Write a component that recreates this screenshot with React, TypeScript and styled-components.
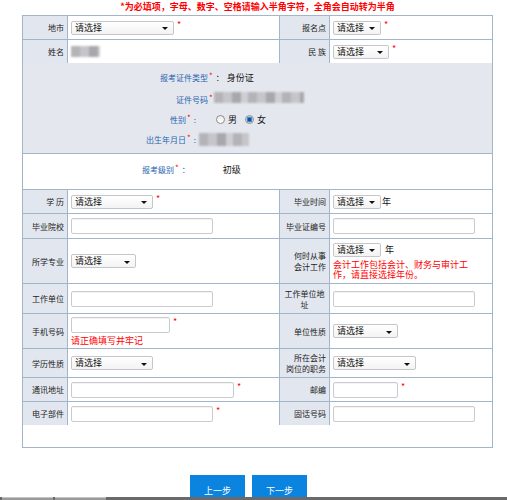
import React from 'react';
import styled, { createGlobalStyle } from 'styled-components';

const GlobalStyle = createGlobalStyle`
  html, body {
    margin: 0;
    background: #fff;
    overflow: hidden;
    font-family: "Noto Sans CJK SC", "Noto Sans", sans-serif;
  }
`;

const Page = styled.div`
  width: 471px;
  margin-left: 22px;
`;

const Notice = styled.div`
  height: 15px;
  line-height: 13px;
  text-align: center;
  color: #ff0000;
  font-size: 9px;
  font-weight: bold;
  white-space: nowrap;
`;

const Form = styled.div`
  border: 1px solid #a3b5c8;
  background: #fff;
  padding-bottom: 22px;
`;

const Grid = styled.div<{ $rows: string }>`
  display: grid;
  grid-template-columns: 44px 211px 49px 162px;
  grid-template-rows: ${(p) => p.$rows};
  gap: 1px;
  background: #a3b5c8;
`;

const Label = styled.div<{ $center?: boolean }>`
  background: #e2e7ef;
  display: flex;
  align-items: center;
  justify-content: ${(p) => (p.$center ? 'center' : 'flex-end')};
  text-align: ${(p) => (p.$center ? 'center' : 'right')};
  padding: 0 3px;
  font-size: 8px;
  line-height: 11px;
  color: #222;
`;

const Value = styled.div`
  background: #fff;
  display: flex;
  align-items: center;
  padding-left: 3px;
  font-size: 9px;
  color: #111;
`;

const Stack = styled.div`
  display: flex;
  flex-direction: column;
  align-items: flex-start;
  gap: 3px;
`;

const Line = styled.div`
  display: flex;
  align-items: center;
`;

const Select = styled.div<{ $w: number }>`
  width: ${(p) => p.$w}px;
  height: 14px;
  box-sizing: border-box;
  border: 1px solid #c3c7cc;
  border-radius: 2px;
  background: linear-gradient(#fff, #f3f3f3);
  display: flex;
  align-items: center;
  justify-content: space-between;
  padding: 0 5px 0 3px;
  font-size: 9px;
  line-height: 12px;
  color: #111;
`;

const Caret = styled.span`
  width: 0;
  height: 0;
  border-left: 3px solid transparent;
  border-right: 3px solid transparent;
  border-top: 3px solid #111;
  margin-top: 2px;
`;

const Input = styled.div<{ $w: number }>`
  width: ${(p) => p.$w}px;
  height: 16px;
  box-sizing: border-box;
  border: 1px solid #c8ccd2;
  border-radius: 2px;
  background: #fff;
  box-shadow: inset 0 1px 1px rgba(0, 0, 0, 0.05);
`;

const Star = styled.span`
  color: #ff0000;
  font-size: 9px;
  line-height: 9px;
  margin-left: 3px;
  margin-bottom: 6px;
`;

const Unit = styled.span<{ $gap?: number }>`
  font-size: 9px;
  margin-left: ${(p) => p.$gap ?? 1}px;
  color: #111;
`;

const Hint = styled.div<{ $w?: number }>`
  color: #ff0000;
  font-size: 9px;
  line-height: 10px;
  max-width: ${(p) => p.$w ?? 200}px;
`;

const Masked = styled.span<{ $w: number; $h: number }>`
  display: inline-block;
  width: ${(p) => p.$w}px;
  height: ${(p) => p.$h}px;
  background: repeating-linear-gradient(
    90deg,
    #b4b4b8 0 9px,
    #c6c6ca 9px 18px,
    #a8a8ac 18px 27px,
    #cfcfd3 27px 34px
  );
  filter: blur(1px);
`;

const Panel = styled.div`
  background: #e4e8ee;
  border-bottom: 1px solid #a3b5c8;
  height: 91px;
  box-sizing: border-box;
  padding-top: 4px;
  display: flex;
  flex-direction: column;
`;

const InfoRow = styled.div<{ $indent: number; $gap?: number }>`
  height: 20px;
  display: flex;
  align-items: center;
  padding-left: ${(p) => p.$indent}px;
  margin-bottom: ${(p) => p.$gap ?? 0}px;
`;

const InfoLabel = styled.span`
  color: #2a64b0;
  font-size: 8px;
`;

const InfoStar = styled.span`
  color: #ff0000;
  font-size: 8px;
  margin-bottom: 4px;
  margin-left: 1px;
`;

const InfoText = styled.span<{ $gap?: number }>`
  font-size: 9px;
  color: #111;
  margin-left: ${(p) => p.$gap ?? 0}px;
`;

const Colon = styled.span<{ $blue?: boolean }>`
  font-size: 8px;
  color: ${(p) => (p.$blue ? '#2a64b0' : '#111')};
  margin: 0 3px 0 3px;
`;

const LevelRow = styled.div`
  height: 36px;
  box-sizing: border-box;
  border-bottom: 1px solid #a3b5c8;
  display: flex;
  align-items: center;
  padding: 0 0 4px 119px;
`;

const RadioGroup = styled.div`
  display: flex;
  align-items: center;
  margin-left: 12px;
  gap: 3px;
`;

const Radio = styled.span<{ $checked?: boolean }>`
  width: 9px;
  height: 9px;
  box-sizing: border-box;
  border-radius: 50%;
  border: 1px solid #8c8c8c;
  background: ${(p) =>
    p.$checked
      ? 'radial-gradient(circle, #1d4f8f 0 1.5px, #3d86d6 2px 2.8px, #f4f4f4 3.2px)'
      : 'linear-gradient(#e9e9e9, #fff)'};
  margin-left: 5px;
`;

const ButtonBar = styled.div`
  display: flex;
  gap: 7px;
  padding-left: 168px;
  margin-top: 27px;
`;

const Button = styled.button`
  width: 55px;
  height: 22px;
  box-sizing: border-box;
  border: 0;
  padding: 8px 0 0;
  background: #0b84e0;
  color: #fff;
  font-family: inherit;
  font-size: 9px;
  line-height: 11px;
  text-align: center;
  vertical-align: top;
`;

const TaskBar = styled.div`
  position: fixed;
  left: 0;
  right: 0;
  bottom: 0;
  height: 3px;
  background: #6a6a6a;
  display: flex;
  gap: 2px;
  padding-left: 2px;
`;

const TaskTab = styled.span`
  width: 51px;
  background: #9a9a9a;
  border-top: 1px solid #c4c4c4;
`;

const Sel = ({ w }: { w: number }) => (
  <Select $w={w}>
    请选择
    <Caret />
  </Select>
);

const App = () => (
  <>
    <GlobalStyle />
    <Page>
      <Notice>*为必填项，字母、数字、空格请输入半角字符，全角会自动转为半角</Notice>
      <Form>
        <Grid $rows="23px 23px">
          <Label>地市</Label>
          <Value>
            <Sel w={103} />
            <Star>*</Star>
          </Value>
          <Label>报名点</Label>
          <Value>
            <Sel w={48} />
            <Star>*</Star>
          </Value>
          <Label>姓名</Label>
          <Value>
            <Masked $w={29} $h={11} />
          </Value>
          <Label>民 族</Label>
          <Value>
            <Sel w={56} />
            <Star>*</Star>
          </Value>
        </Grid>

        <Panel>
          <InfoRow $indent={137} $gap={2}>
            <InfoLabel>报考证件类型</InfoLabel>
            <InfoStar>*</InfoStar>
            <Colon>：</Colon>
            <InfoText>身份证</InfoText>
          </InfoRow>
          <InfoRow $indent={153}>
            <InfoLabel>证件号码</InfoLabel>
            <InfoStar>*</InfoStar>
            <InfoText $gap={1}>
              <Masked $w={90} $h={11} />
            </InfoText>
          </InfoRow>
          <InfoRow $indent={147}>
            <InfoLabel>性别</InfoLabel>
            <InfoStar>*</InfoStar>
            <Colon $blue>:</Colon>
            <RadioGroup>
              <Radio />
              <InfoText>男</InfoText>
              <Radio $checked />
              <InfoText>女</InfoText>
            </RadioGroup>
          </InfoRow>
          <InfoRow $indent={123}>
            <InfoLabel>出生年月日</InfoLabel>
            <InfoStar>*</InfoStar>
            <Colon $blue>:</Colon>
            <Masked $w={50} $h={13} />
          </InfoRow>
        </Panel>

        <LevelRow>
          <InfoLabel>报考级别</InfoLabel>
          <InfoStar>*</InfoStar>
          <Colon $blue>：</Colon>
          <InfoText $gap={30}>初级</InfoText>
        </LevelRow>

        <Grid $rows="23px 24px 44px 29px 34px 28px 23px 23px">
          <Label>学 历</Label>
          <Value>
            <Sel w={82} />
            <Star>*</Star>
          </Value>
          <Label>毕业时间</Label>
          <Value>
            <Sel w={48} />
            <Unit>年</Unit>
          </Value>

          <Label>毕业院校</Label>
          <Value>
            <Input $w={142} />
          </Value>
          <Label>毕业证编号</Label>
          <Value>
            <Input $w={142} />
          </Value>

          <Label>所学专业</Label>
          <Value>
            <Sel w={65} />
          </Value>
          <Label>
            何时从事
            <br />
            会计工作
          </Label>
          <Value>
            <Stack>
              <Line>
                <Sel w={48} />
                <Unit $gap={4}>年</Unit>
              </Line>
              <Hint $w={141}>会计工作包括会计、财务与审计工作，请直接选择年份。</Hint>
            </Stack>
          </Value>

          <Label>工作单位</Label>
          <Value>
            <Input $w={142} />
          </Value>
          <Label $center>工作单位地址</Label>
          <Value>
            <Input $w={142} />
          </Value>

          <Label>手机号码</Label>
          <Value>
            <Stack>
              <Line>
                <Input $w={99} />
                <Star>*</Star>
              </Line>
              <Hint>请正确填写并牢记</Hint>
            </Stack>
          </Value>
          <Label>单位性质</Label>
          <Value>
            <Sel w={65} />
          </Value>

          <Label>学历性质</Label>
          <Value>
            <Sel w={82} />
          </Value>
          <Label>
            所在会计
            <br />
            岗位的职务
          </Label>
          <Value>
            <Sel w={83} />
          </Value>

          <Label>通讯地址</Label>
          <Value>
            <Input $w={163} />
            <Star>*</Star>
          </Value>
          <Label>邮编</Label>
          <Value>
            <Input $w={65} />
            <Star>*</Star>
          </Value>

          <Label>电子部件</Label>
          <Value>
            <Input $w={142} />
            <Star>*</Star>
          </Value>
          <Label>固话号码</Label>
          <Value>
            <Input $w={142} />
          </Value>
        </Grid>
      </Form>
      <ButtonBar>
        <Button>上一步</Button>
        <Button>下一步</Button>
      </ButtonBar>
    </Page>
    <TaskBar>
      <TaskTab />
      <TaskTab />
    </TaskBar>
  </>
);

export default App;
